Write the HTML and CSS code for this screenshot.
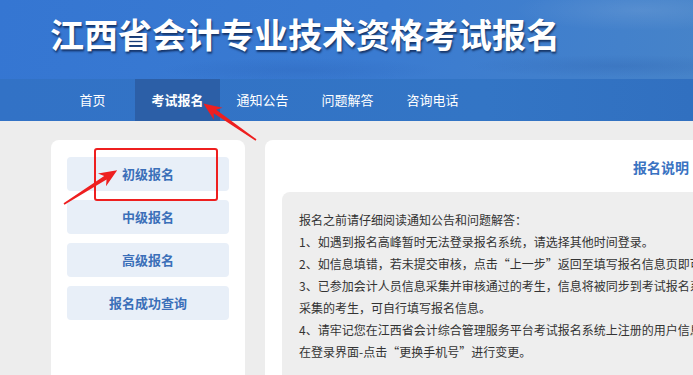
FILE: index.html
```html
<!DOCTYPE html>
<html lang="zh-CN">
<head>
<meta charset="utf-8">
<title>江西省会计专业技术资格考试报名</title>
<link rel="stylesheet" href="styles.css">
</head>
<body>
<div class="page">
  <header class="banner">
    <h1 class="title">江西省会计专业技术资格考试报名</h1>
  </header>
  <nav class="nav">
    <div class="nav-inner">
      <a class="nav-item">首页</a>
      <a class="nav-item active">考试报名</a>
      <a class="nav-item">通知公告</a>
      <a class="nav-item">问题解答</a>
      <a class="nav-item">咨询电话</a>
    </div>
  </nav>
  <main class="main">
    <aside class="side">
      <a class="side-btn">初级报名</a>
      <a class="side-btn">中级报名</a>
      <a class="side-btn">高级报名</a>
      <a class="side-btn">报名成功查询</a>
    </aside>
    <section class="content">
      <h2 class="content-title">报名说明</h2>
      <div class="notice">
        <p class="line">报名之前请仔细阅读通知公告和问题解答：</p>
        <p class="line">1、如遇到报名高峰暂时无法登录报名系统，请选择其他时间登录。</p>
        <p class="line">2、如信息填错，若未提交审核，点击“上一步”返回至填写报名信息页即可修改，若已提交审核，请联系考区咨询。</p>
        <p class="line">3、已参加会计人员信息采集并审核通过的考生，信息将被同步到考试报名系统中，无需再次填写；未参加会计人员信息<br>采集的考生，可自行填写报名信息。</p>
        <p class="line">4、请牢记您在江西省会计综合管理服务平台考试报名系统上注册的用户信息，如需更换注册手机号码，可<br>在登录界面-点击“更换手机号”进行变更。</p>
      </div>
    </section>
  </main>
  <svg class="marks" width="693" height="375" viewBox="0 0 693 375" aria-hidden="true">
    <rect x="95" y="149" width="122" height="51" rx="2" fill="none" stroke="#ee1f1f" stroke-width="2"/>
    <g transform="translate(256 140) rotate(-145.3)" fill="#ee1f1f">
      <polygon points="0,-0.8 50,-2.2 46,-7.5 64,0 46,7.5 50,2.2 0,0.8"/>
    </g>
    <g transform="translate(64 204) rotate(-32.4)" fill="#ee1f1f">
      <polygon points="0,-0.8 49,-2.2 45,-7.5 63,0 45,7.5 49,2.2 0,0.8"/>
    </g>
  </svg>
</div>
</body>
</html>
```
FILE: styles.css
```css
* { box-sizing: border-box; }
html, body { margin: 0; padding: 0; }
body {
  background: #ededed;
  font-family: "Noto Sans CJK SC", "Noto Sans", sans-serif;
  overflow: hidden;
}
.page { position: relative; width: 693px; height: 375px; overflow: hidden; }
.banner {
  height: 79px;
  background:
    radial-gradient(ellipse 180px 30px at 640px 10px, rgba(255,255,255,0.10), rgba(255,255,255,0) 70%),
    radial-gradient(ellipse 200px 18px at 300px 70px, rgba(20,60,140,0.12), rgba(20,60,140,0) 70%),
    radial-gradient(ellipse 220px 16px at 620px 66px, rgba(20,60,140,0.14), rgba(20,60,140,0) 70%),
    linear-gradient(100deg, #3576d2 0%, #3a7bd1 55%, #4683c9 100%);
  padding: 17px 0 0 50px;
}
.title {
  margin: 0;
  font-size: 34px;
  line-height: 34px;
  font-weight: 700;
  color: #ffffff;
  letter-spacing: 0;
  white-space: nowrap;
  text-shadow: 1px 2px 2px rgba(10, 30, 70, 0.75);
}
.nav {
  height: 42px;
  background: linear-gradient(90deg, #3272c6 0%, #3375c5 70%, #3170c0 100%);
}
.nav-inner { display: flex; padding-left: 50px; height: 100%; }
.nav-item {
  width: 85px;
  flex: none;
  text-align: center;
  line-height: 42px;
  font-size: 13px;
  color: #ffffff;
  white-space: nowrap;
}
.nav-item.active { background: #2c5fa7; font-weight: 700; }
.main {
  display: flex;
  align-items: flex-start;
  gap: 20px;
  padding: 19px 0 0 51px;
}
.side {
  flex: none;
  width: 194px;
  height: 260px;
  background: #ffffff;
  border-radius: 8px;
  padding: 17px 16px;
  display: flex;
  flex-direction: column;
  gap: 9px;
}
.side-btn {
  display: block;
  height: 34px;
  line-height: 34px;
  text-align: center;
  background: #e8eff8;
  border-radius: 4px;
  color: #3b6fb9;
  font-size: 13px;
  font-weight: 700;
}
.content {
  flex: none;
  width: 792px;
  height: 260px;
  background: #ffffff;
  border-radius: 8px;
  padding: 17px 17px 0;
}
.content-title {
  margin: 0 0 15px;
  text-align: center;
  font-size: 14px;
  line-height: 20px;
  font-weight: 700;
  color: #3a73c2;
}
.notice {
  background: #eeeeee;
  border-radius: 8px;
  padding: 17px 17px 20px;
  height: 200px;
}
.line {
  margin: 0;
  font-size: 12px;
  line-height: 22px;
  color: #333333;
  white-space: nowrap;
}
.marks { position: absolute; left: 0; top: 0; pointer-events: none; }
```
